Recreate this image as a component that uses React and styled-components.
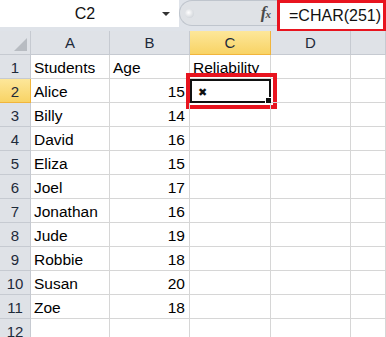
import styled, { createGlobalStyle } from "styled-components";

const Global = createGlobalStyle`
  body {
    margin: 0;
    background: #ffffff;
    font-family: "Liberation Sans", Arial, sans-serif;
  }
`;

const Sheet = styled.div`
  width: 386px;
  height: 337px;
  overflow: hidden;
  background: #ffffff;
`;

const FormulaBar = styled.div`
  display: flex;
  height: 31px;
  background: #dfe3e9;
`;

const NameBox = styled.div`
  width: 179px;
  height: 27px;
  background: #ffffff;
  display: flex;
  align-items: center;
  font-size: 16px;
  color: #111;
`;

const NameText = styled.span`
  flex: 1;
  text-align: center;
  padding-left: 8px;
`;

const DropArrow = styled.span`
  width: 0;
  height: 0;
  border-left: 4px solid transparent;
  border-right: 4px solid transparent;
  border-top: 4px solid #333;
  margin-right: 9px;
`;

const Pill = styled.div`
  width: 98px;
  height: 26px;
  border-radius: 13px 0 0 13px;
  background: #dfe2e6;
  border: 1px solid #bfc5cd;
  border-right: none;
  box-sizing: border-box;
  display: flex;
  align-items: center;
  justify-content: space-between;
  padding: 0 6px 0 5px;
`;

const Knob = styled.span`
  width: 9px;
  height: 9px;
  border-radius: 50%;
  background: radial-gradient(circle at 40% 40%, #ffffff, #c2c7ce);
`;

const Fx = styled.span`
  font-family: "Liberation Serif", serif;
  font-style: italic;
  font-weight: bold;
  font-size: 17px;
  color: #4a4a4a;
  & small {
    font-size: 11px;
    margin-left: -1px;
  }
`;

const FormulaBox = styled.div`
  flex: 1;
  height: 32px;
  box-sizing: border-box;
  border: 3px solid #e8141f;
  background: #ffffff;
  display: flex;
  align-items: center;
  padding-left: 9px;
  font-size: 16px;
  color: #111;
`;

const Grid = styled.div`
  display: grid;
  grid-template-columns: 31px 79px 80px 81px 80px 35px;
  grid-auto-rows: 24px;
`;

const Corner = styled.div`
  background: #dfe2e7;
  border-right: 1px solid #c6cad1;
  border-bottom: 1px solid #c6cad1;
  box-sizing: border-box;
  position: relative;
  &::after {
    content: "";
    position: absolute;
    right: 3px;
    bottom: 3px;
    border-left: 13px solid transparent;
    border-bottom: 13px solid #b8bcc2;
  }
`;

const ColHead = styled.div`
  background: ${(p) => (p.$active ? "linear-gradient(#fde79a, #f8d365)" : "#dfe2e7")};
  border-right: 1px solid ${(p) => (p.$active ? "#f1b53c" : "#c6cad1")};
  border-bottom: 1px solid ${(p) => (p.$active ? "#f1b53c" : "#c6cad1")};
  box-sizing: border-box;
  display: flex;
  align-items: center;
  justify-content: center;
  font-size: 15px;
  color: #1e2a3a;
`;

const RowHead = styled(ColHead)`
  padding-top: 1px;
`;

const Cell = styled.div`
  border-right: 1px solid #d6d6d6;
  border-bottom: 1px solid #d6d6d6;
  box-sizing: border-box;
  display: flex;
  align-items: center;
  justify-content: ${(p) => (p.$num ? "flex-end" : "flex-start")};
  padding: 2px 4px 0 3px;
  font-size: 15.5px;
  color: #000;
  white-space: nowrap;
  position: relative;
`;

const Selected = styled(Cell)`
  border: 2px solid #111;
  padding-left: 6px;
  &::after {
    content: "";
    position: absolute;
    right: -3px;
    bottom: -3px;
    width: 5px;
    height: 5px;
    background: #111;
    border: 1px solid #fff;
  }
`;

const Highlight = styled.div`
  position: absolute;
  left: -6px;
  top: -8px;
  right: -8px;
  bottom: -8px;
  border: 4px solid #e8141f;
  pointer-events: none;
`;

const Cross = styled.span`
  font-family: "DejaVu Sans", sans-serif;
  font-size: 11px;
  color: #111;
  font-weight: bold;
`;

const students = [
  ["Alice", 15],
  ["Billy", 14],
  ["David", 16],
  ["Eliza", 15],
  ["Joel", 17],
  ["Jonathan", 16],
  ["Jude", 19],
  ["Robbie", 18],
  ["Susan", 20],
  ["Zoe", 18],
];

const cols = ["A", "B", "C", "D", ""];

const Row = ({ n, name, age }) => (
  <>
    <RowHead $active={n === 2}>{n}</RowHead>
    <Cell>{name}</Cell>
    <Cell $num>{age}</Cell>
    {n === 2 ? (
      <Selected>
        <Cross>✖</Cross>
        <Highlight />
      </Selected>
    ) : (
      <Cell />
    )}
    <Cell />
    <Cell />
  </>
);

const App = () => {
  return (
    <Sheet>
      <Global />
      <FormulaBar>
        <NameBox>
          <NameText>C2</NameText>
          <DropArrow />
        </NameBox>
        <Pill>
          <Knob />
          <Fx>f<small>x</small></Fx>
        </Pill>
        <FormulaBox>=CHAR(251)</FormulaBox>
      </FormulaBar>
      <Grid>
        <Corner />
        {cols.map((c, i) => (
          <ColHead key={i} $active={c === "C"}>{c}</ColHead>
        ))}

        <RowHead>1</RowHead>
        <Cell>Students</Cell>
        <Cell>Age</Cell>
        <Cell>Reliability</Cell>
        <Cell />
        <Cell />

        {students.map(([name, age], i) => (
          <Row key={name} n={i + 2} name={name} age={age} />
        ))}

        <RowHead>12</RowHead>
        <Cell />
        <Cell />
        <Cell />
        <Cell />
        <Cell />
      </Grid>
    </Sheet>
  );
};

export default App;
